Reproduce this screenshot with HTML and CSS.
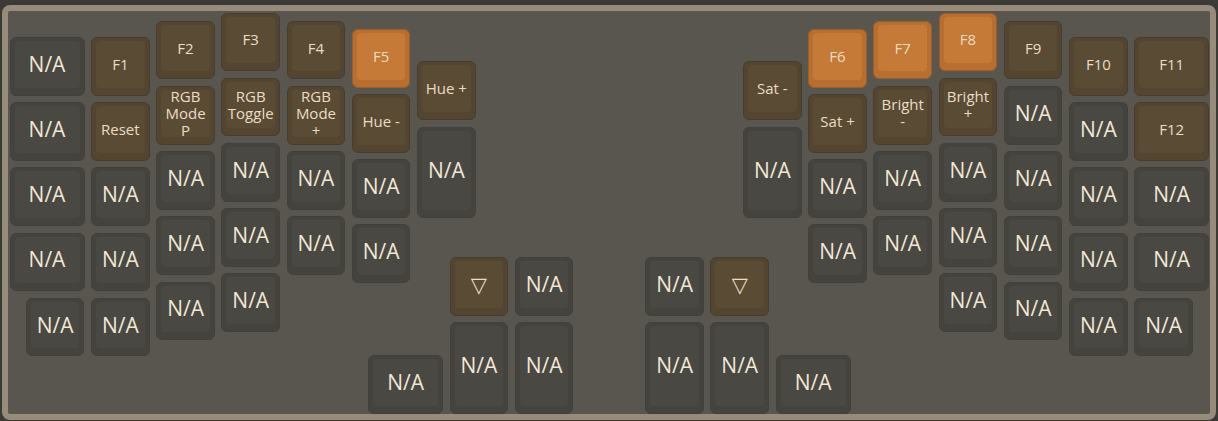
FILE: index.html
```html
<!DOCTYPE html>
<html lang="en">
<head>
  <meta charset="UTF-8" />
  <meta name="viewport" content="width=device-width, initial-scale=1.0"/>
  <title>Keymap</title>
  <link rel="stylesheet" href="styles.css">
</head>
<body>
  <div class="board" id="board"></div>
  <script src="keys.js"></script>
</body>
</html>
```

FILE: styles.css
```css
body {
  font-family: "Open Sans", "DejaVu Sans", sans-serif;
  background-color: #3b3a37;
  margin: 0;
  height: 421px;
  overflow: hidden;
}
.board {
  position: relative;
  box-sizing: border-box;
  margin: 5px 2px 0;
  height: 415px;
  border: 6px solid #978c79;
  border-radius: 8px;
  background-color: #58564e;
}
.key {
  position: absolute;
  box-sizing: border-box;
  padding: 3px 4px 7px;
  border: 1px solid #42403b;
  border-radius: 6px;
  background-color: #45433e;
}
.face {
  height: 100%;
  display: flex;
  align-items: center;
  justify-content: center;
  text-align: center;
  white-space: pre-line;
  border-radius: 4px;
  background-color: #4a4843;
  color: #f1e7d4;
  font-size: 21px;
  line-height: 17px;
}
.key.fn {
  background-color: #53452f;
  border-color: #463d30;
}
.key.fn .face {
  background-color: #5a4b35;
}
.key.hi {
  background-color: #b86e2f;
  border-color: #9a5e2d;
}
.key.hi .face {
  background-color: #c57a38;
}
.key.fn .face,
.key.hi .face {
  color: #ecdcc3;
  font-size: 15px;
}
.key.fn .face.glyph {
  font-size: 21px;
}
```

FILE: keys.js
```js
// keyboard layout in key units, positions are measured from the first row
const U = 65.2;
const OX = 1.5;   // left of first column inside the board
const OY = 26;    // top of first row inside the board
const GAP = 6.5;

const keys = [];

function col(x, y, labels, w = 1) {
  labels.forEach((k, i) => {
    keys.push({ x: x, y: y + i, w: w, h: 1, label: k[0], type: k[1] });
  });
}

const NA = ["N/A", "na"];

// left hand
col(0, 0, [NA, NA, NA, NA], 1.25);
col(0.25, 4, [NA]);
col(1.25, 0, [["F1", "fn"], ["Reset", "fn"], NA, NA, NA]);
col(2.25, -0.25, [["F2", "fn"], ["RGB\nMode\nP", "fn"], NA, NA, NA]);
col(3.25, -0.375, [["F3", "fn"], ["RGB\nToggle", "fn"], NA, NA, NA]);
col(4.25, -0.25, [["F4", "fn"], ["RGB\nMode\n+", "fn"], NA, NA]);
col(5.25, -0.125, [["F5", "hi"], ["Hue -", "fn"], NA, NA]);
col(6.25, 0.375, [["Hue +", "fn"]]);
keys.push({ x: 6.25, y: 1.375, w: 1, h: 1.5, label: "N/A", type: "na" });

// left thumb
col(6.75, 3.375, [["▽", "fn"]]);
col(7.75, 3.375, [NA]);
keys.push({ x: 6.75, y: 4.375, w: 1, h: 1.5, label: "N/A", type: "na" });
keys.push({ x: 7.75, y: 4.375, w: 1, h: 1.5, label: "N/A", type: "na" });
keys.push({ x: 5.5, y: 4.875, w: 1.25, h: 1, label: "N/A", type: "na" });

// right thumb
col(9.75, 3.375, [NA]);
col(10.75, 3.375, [["▽", "fn"]]);
keys.push({ x: 9.75, y: 4.375, w: 1, h: 1.5, label: "N/A", type: "na" });
keys.push({ x: 10.75, y: 4.375, w: 1, h: 1.5, label: "N/A", type: "na" });
keys.push({ x: 11.75, y: 4.875, w: 1.25, h: 1, label: "N/A", type: "na" });

// right hand
col(11.25, 0.375, [["Sat -", "fn"]]);
keys.push({ x: 11.25, y: 1.375, w: 1, h: 1.5, label: "N/A", type: "na" });
col(12.25, -0.125, [["F6", "hi"], ["Sat +", "fn"], NA, NA]);
col(13.25, -0.25, [["F7", "hi"], ["Bright\n-", "fn"], NA, NA]);
col(14.25, -0.375, [["F8", "hi"], ["Bright\n+", "fn"], NA, NA, NA]);
col(15.25, -0.25, [["F9", "fn"], NA, NA, NA, NA]);
col(16.25, 0, [["F10", "fn"], NA, NA, NA, NA]);
col(17.25, 0, [["F11", "fn"], ["F12", "fn"], NA, NA], 1.25);
col(17.25, 4, [NA]);

const board = document.getElementById("board");
keys.forEach(k => {
  const el = document.createElement("div");
  el.className = "key " + k.type;
  el.style.left = (OX + k.x * U) + "px";
  el.style.top = (OY + k.y * U) + "px";
  el.style.width = (k.w * U - GAP) + "px";
  el.style.height = (k.h * U - GAP) + "px";
  const face = document.createElement("div");
  face.className = "face";
  if (k.label === "▽") face.classList.add("glyph");
  face.textContent = k.label;
  el.appendChild(face);
  board.appendChild(el);
});
```
